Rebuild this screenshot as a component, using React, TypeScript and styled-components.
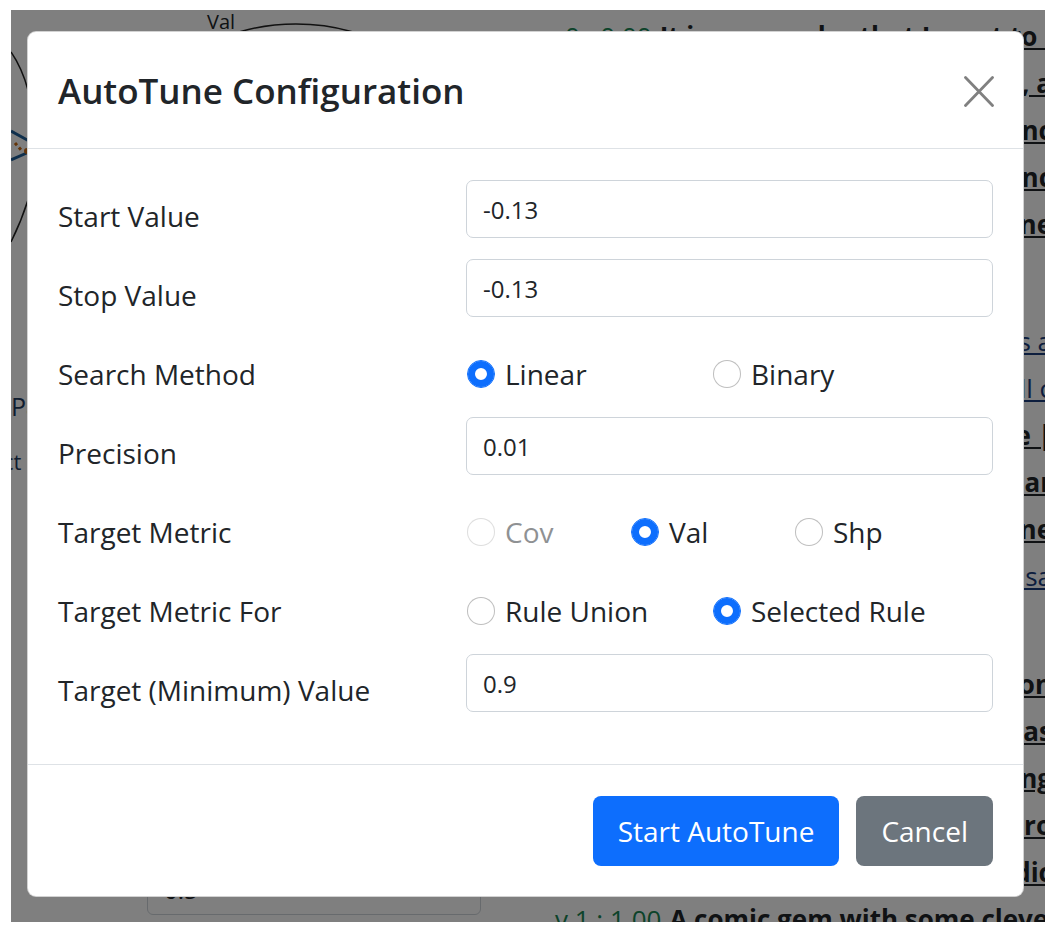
import React from "react";
import styled, { createGlobalStyle } from "styled-components";

const GlobalStyle = createGlobalStyle`
  html, body { margin: 0; padding: 0; background: #ffffff; }
  body { font-family: "Open Sans", "Noto Sans", sans-serif; color: #212529; }
  * { box-sizing: border-box; }
`;

const Frame = styled.div`
  width: 1060px;
  height: 936px;
  padding: 10px 15px 14px 11px;
`;

const Viewport = styled.div`
  position: relative;
  width: 1034px;
  height: 912px;
  overflow: hidden;
  background: #ffffff;
  display: grid;
  grid-template-columns: 535px 1fr;
`;

/* ---------- background page ---------- */

const LeftPane = styled.div`
  display: flex;
  flex-direction: column;
  overflow: hidden;
`;

const Chart = styled.svg`
  display: block;
  flex: none;
`;

const PaneHeading = styled.div`
  margin-top: 8px;
  font-size: 25px;
  font-weight: 500;
  line-height: 36px;
  color: #1e3a5f;
  white-space: nowrap;
`;

const PaneText = styled.div`
  margin-top: 22px;
  margin-left: -8px;
  font-size: 22px;
  line-height: 30px;
  color: #1e3a5f;
  white-space: nowrap;
`;

const MockInput = styled.div`
  margin-top: auto;
  margin-bottom: 7px;
  margin-left: 136px;
  width: 334px;
  height: 52px;
  border: 1px solid #ced4da;
  border-radius: 6px;
  padding: 0 16px;
  font-size: 24px;
  line-height: 52px;
  color: #212529;
`;

const RightPane = styled.div`
  display: flex;
  flex-direction: column;
  padding-top: 3px;
  overflow: hidden;
  font-size: 26px;
`;

const Item = styled.div<{ $after: number }>`
  display: flex;
  flex-direction: column;
  padding-bottom: ${(p) => p.$after}px;
`;

const HeadLine = styled.div<{ $indent: number }>`
  display: flex;
  gap: 8px;
  white-space: nowrap;
  line-height: 47px;
  height: 47px;
  padding-left: ${(p) => p.$indent}px;
`;

const ContLine = styled.div`
  display: flex;
  justify-content: flex-end;
  white-space: nowrap;
  line-height: 47px;
  height: 47px;
  margin-right: -7px;
`;

const Score = styled.span`
  color: #198754;
`;

const Strong = styled.span`
  font-weight: 700;
  color: #212529;
  text-decoration: underline;
`;

const Plain = styled.span`
  color: #1a3d7c;
  text-decoration: underline;
`;

/* ---------- modal ---------- */

const Backdrop = styled.div`
  position: absolute;
  inset: 0;
  background: rgba(0, 0, 0, 0.5);
`;

const Dialog = styled.div`
  position: absolute;
  left: 16px;
  top: 21px;
  width: 997px;
  background: #ffffff;
  border: 1px solid rgba(0, 0, 0, 0.175);
  border-radius: 9px;
  display: flex;
  flex-direction: column;
`;

const Header = styled.div`
  display: flex;
  align-items: center;
  justify-content: space-between;
  height: 117px;
  padding: 2px 29px 0 30px;
  border-bottom: 1px solid #dee2e6;
`;

const Title = styled.h5`
  margin: 0;
  font-size: 35px;
  font-weight: 600;
  line-height: 1.2;
  color: #212529;
`;

const CloseButton = styled.button`
  width: 30px;
  height: 31px;
  padding: 0;
  border: none;
  background: transparent;
  display: flex;
  align-items: center;
  justify-content: center;
  cursor: pointer;
`;

const Body = styled.div`
  display: flex;
  flex-direction: column;
  gap: 21px;
  padding: 31px 30px 52px 30px;
`;

const Row = styled.div`
  display: grid;
  grid-template-columns: 408px 1fr;
  height: 58px;
`;

const Label = styled.label`
  padding-top: 15px;
  font-size: 28px;
  line-height: 42px;
  color: #212529;
  white-space: nowrap;
`;

const Input = styled.input`
  width: 100%;
  height: 58px;
  border: 1px solid #ced4da;
  border-radius: 7px;
  padding: 0 16px;
  font-family: inherit;
  font-size: 24px;
  color: #212529;
  background: #ffffff;
  outline: none;
`;

const RadioGroup = styled.div<{ $col: number; $count: number }>`
  display: grid;
  grid-template-columns: repeat(${(p) => p.$count}, ${(p) => p.$col}px);
  padding-top: 15px;
`;

const RadioOption = styled.label<{ $disabled?: boolean }>`
  display: flex;
  align-items: center;
  gap: 10px;
  height: 42px;
  font-size: 28px;
  line-height: 42px;
  color: #212529;
  white-space: nowrap;
  opacity: ${(p) => (p.$disabled ? 0.5 : 1)};
`;

const RadioCircle = styled.span<{ $checked?: boolean }>`
  flex: none;
  width: 28px;
  height: 28px;
  margin-left: 1px;
  border-radius: 50%;
  background: #ffffff;
  border: 1px solid ${(p) => (p.$checked ? "#0d6efd" : "rgba(0,0,0,0.25)")};
  box-shadow: ${(p) => (p.$checked ? "inset 0 0 0 7px #0d6efd" : "none")};
`;

const Footer = styled.div`
  display: flex;
  justify-content: flex-end;
  gap: 17px;
  padding: 31px 30px 30px 30px;
  border-top: 1px solid #dee2e6;
`;

const Button = styled.button<{ $variant: "primary" | "secondary" }>`
  height: 70px;
  padding: 0 25px;
  border: none;
  border-radius: 8px;
  font-family: inherit;
  font-size: 28px;
  color: #ffffff;
  background: ${(p) => (p.$variant === "primary" ? "#0d6efd" : "#6c757d")};
  cursor: pointer;
`;

type RadioSpec = { label: string; checked?: boolean; disabled?: boolean };

const Radios: React.FC<{ options: RadioSpec[]; col: number }> = ({ options, col }) => (
  <RadioGroup $col={col} $count={options.length}>
    {options.map((o) => (
      <RadioOption key={o.label} $disabled={o.disabled}>
        <RadioCircle $checked={o.checked} />
        {o.label}
      </RadioOption>
    ))}
  </RadioGroup>
);

type Line = { head?: { score: string; text: string; indent: number }; tail?: string; plain?: boolean };

const items: { after: number; lines: Line[] }[] = [
  {
    after: 70,
    lines: [
      { head: { score: "0 : 0.00", text: "It is no wonder that I went to it", indent: 19 } },
      { tail: "the story drags on, a" },
      { tail: "a predictable and pronounc" },
      { tail: "with little chance of an announc" },
      { tail: "it never finds its rhythm or tone" },
    ],
  },
  {
    after: 61,
    lines: [
      { tail: "the jokes are tired and so are its a", plain: true },
      { tail: "a weak and dull c", plain: true },
      { tail: "a strange and lifeless e |" },
      { tail: "its characters are thin and stock ar" },
      { tail: "by the end you simply ce ne" },
      { tail: "the same old formula sa", plain: true },
    ],
  },
  {
    after: 0,
    lines: [
      { tail: "a fine and moving depiction" },
      { tail: "as warm as it is clever as" },
      { tail: "a smart and touching coming" },
      { tail: "its leads are strong and pro" },
      { tail: "a funny and sharply predic" },
      { head: { score: "v 1 : 1.00", text: "A comic gem with some clever jokes", indent: 9 } },
    ],
  },
];

export default function App() {
  return (
    <>
      <GlobalStyle />
      <Frame>
        <Viewport>
          <LeftPane>
            <Chart width={535} height={370} viewBox="0 0 535 370">
              <text x={196} y={19} fontSize={20} fontFamily="Open Sans, sans-serif" fill="#212529">
                Val
              </text>
              <ellipse cx={285} cy={120} rx={150} ry={106} fill="none" stroke="#222" strokeWidth={1.5} />
              <path d="M 0 42 Q 11 58 17 80" fill="none" stroke="#222" strokeWidth={1.5} />
              <path d="M 17 190 Q 10 212 0 232" fill="none" stroke="#222" strokeWidth={1.5} />
              <path d="M 0 121 L 18 131" fill="none" stroke="#1f5f99" strokeWidth={3} />
              <path d="M 0 150 L 18 142" fill="none" stroke="#1f5f99" strokeWidth={3} />
              <path d="M 4 133 L 11 141" fill="none" stroke="#c96a12" strokeWidth={3} strokeDasharray="3 3" />
              <circle cx={16} cy={141} r={3} fill="#c96a12" />
            </Chart>
            <PaneHeading>Parameters</PaneHeading>
            <PaneText>ct the threshold range</PaneText>
            <MockInput>0.5</MockInput>
          </LeftPane>
          <RightPane>
            {items.map((it, i) => (
              <Item key={i} $after={it.after}>
                {it.lines.map((l, j) =>
                  l.head ? (
                    <HeadLine key={j} $indent={l.head.indent}>
                      <Score>{l.head.score}</Score>
                      <Strong>{l.head.text}</Strong>
                    </HeadLine>
                  ) : (
                    <ContLine key={j}>{l.plain ? <Plain>{l.tail}</Plain> : <Strong>{l.tail}</Strong>}</ContLine>
                  )
                )}
              </Item>
            ))}
          </RightPane>

          <Backdrop />
          <Dialog role="dialog" aria-modal="true">
            <Header>
              <Title>AutoTune Configuration</Title>
              <CloseButton aria-label="Close">
                <svg width="30" height="31" viewBox="0 0 30 31">
                  <path d="M 1.5 1.5 L 28.5 29.5 M 28.5 1.5 L 1.5 29.5" stroke="#808080" strokeWidth={2.8} strokeLinecap="round" />
                </svg>
              </CloseButton>
            </Header>
            <Body>
              <Row>
                <Label>Start Value</Label>
                <Input defaultValue="-0.13" />
              </Row>
              <Row>
                <Label>Stop Value</Label>
                <Input defaultValue="-0.13" />
              </Row>
              <Row>
                <Label>Search Method</Label>
                <Radios col={246} options={[{ label: "Linear", checked: true }, { label: "Binary" }]} />
              </Row>
              <Row>
                <Label>Precision</Label>
                <Input defaultValue="0.01" />
              </Row>
              <Row>
                <Label>Target Metric</Label>
                <Radios
                  col={164}
                  options={[{ label: "Cov", disabled: true }, { label: "Val", checked: true }, { label: "Shp" }]}
                />
              </Row>
              <Row>
                <Label>Target Metric For</Label>
                <Radios col={246} options={[{ label: "Rule Union" }, { label: "Selected Rule", checked: true }]} />
              </Row>
              <Row>
                <Label>Target (Minimum) Value</Label>
                <Input defaultValue="0.9" />
              </Row>
            </Body>
            <Footer>
              <Button $variant="primary">Start AutoTune</Button>
              <Button $variant="secondary">Cancel</Button>
            </Footer>
          </Dialog>
        </Viewport>
      </Frame>
    </>
  );
}
